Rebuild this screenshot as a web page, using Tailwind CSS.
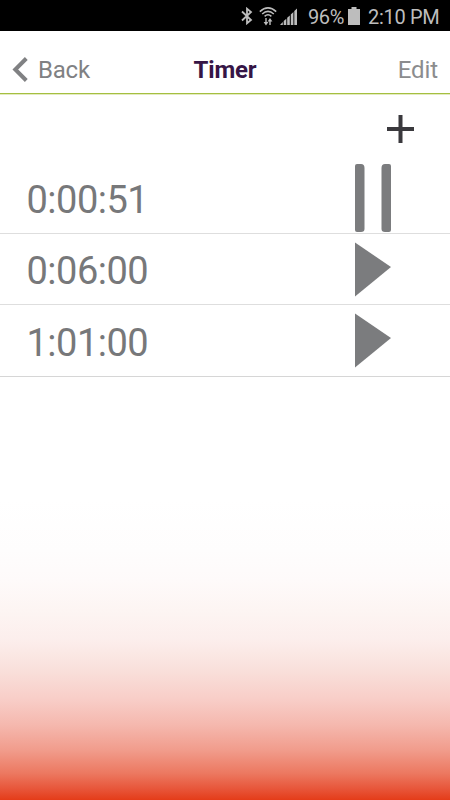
<!DOCTYPE html>
<html lang="en">
<head>
<meta charset="utf-8">
<title>Timer</title>
<script src="https://cdn.jsdelivr.net/npm/@tailwindcss/browser@4"></script>
</head>
<body class="overflow-hidden">
<div class="flex h-[800px] w-[450px] flex-col bg-[linear-gradient(to_bottom,#fff_500px,#fefdfd_550px,#fefafa_580px,#fdf5f3_610px,#fceeec_640px,#f9e0db_670px,#f8cdc7_700px,#f5b8ae_725px,#f19c8c_750px,#ec7961_773px,#e75337_790px,#e43c19_800px)] font-['Roboto',sans-serif] text-[#77787a]">
  <header class="flex h-[31px] shrink-0 items-center bg-black pl-[241px] text-[20px] leading-[31px] text-[#bdbdbd]">
    <svg class="mt-[1px] h-[18px] w-[12px] shrink-0" viewBox="0 0 12 18" fill="none" stroke="#bdbdbd" stroke-width="1.8"><path d="M1 4.5 10 13 6 16.3V1.7L10 5 1 13.5"/></svg>
    <svg class="ml-[6px] mt-[1px] h-[19px] w-[18px] shrink-0" viewBox="0 0 18 19" fill="none" stroke="#bdbdbd" stroke-width="1.5"><path d="M.8 4.600Q9-2.800 17.200 4.600M3.200 7Q9 1.800 14.800 7M5.600 9.400Q9 6.200 12.400 9.400"/><path d="M7 11V16M11 18v-5" stroke-width="1.4"/><path d="M4.600 15h4.800L7 18.400zM8.600 14.400h4.800L11 11z" fill="#bdbdbd" stroke="none"/></svg>
    <svg class="ml-[3px] mt-px h-[17px] w-[18px] shrink-0" viewBox="0 0 18 17" fill="#bdbdbd"><path d="M0 17 2.800 14v3zM3.700 17v-4l2.600-2.200V17zM7.200 17V9.800l2.600-2.400V17zM10.800 17V6.400L13.400 4v13zM14.300 17V3L17 .5V17z"/></svg>
    <span class="ml-[10px] mt-[3px] w-[38px] whitespace-nowrap tracking-[-0.4px]">96%</span>
    <svg class="ml-[2px] mt-px h-[18px] w-[12px] shrink-0" viewBox="0 0 12 18" fill="#bdbdbd"><path d="M0 2h3.500V0h5v2H12v16H0z"/></svg>
    <span class="ml-[8px] mt-[3px] whitespace-nowrap tracking-[-0.3px]">2:10 PM</span>
  </header>
  <nav class="grid h-[63px] shrink-0 grid-cols-3 items-center border-b border-[#a5bf40] bg-white px-[12px] pt-[15px] text-[24px] shadow-[0_1px_0_#e3ebc0]">
    <div class="flex items-center">
      <svg class="h-[25px] w-[16px]" viewBox="0 0 16 25" fill="none" stroke="#808183" stroke-width="4"><path d="M14.300 1.500 3.300 12.500 14.300 23.500"/></svg>
      <span class="ml-[10px] mt-px tracking-[-0.2px] text-[#808183]">Back</span>
    </div>
    <h1 class="mt-px text-center text-[24px] font-bold tracking-[-0.2px] text-[#361546]">Timer</h1>
    <span class="mt-px text-right tracking-[-0.1px] text-[#8b8c8e]">Edit</span>
  </nav>
  <div class="flex h-[69px] shrink-0 items-center justify-end pr-[36px]">
    <svg class="h-[28px] w-[27px]" viewBox="0 0 27 28" fill="none" stroke="#3a393d" stroke-width="4"><path d="M0 14h27M13.500 0v28"/></svg>
  </div>
  <main class="text-[38px] leading-[68px] tracking-[-0.5px]">
    <div class="flex h-[71px] items-center justify-between border-b border-[#dedede] pl-[26.5px] pr-[59px]">
      <span class="pt-[4px]">0:00:51</span>
      <svg class="h-[70px] w-[36px]" viewBox="0 0 36 70" fill="#7b7c7e"><path d="M0 3Q0 1 2 1h4q3.500 0 3.500 4v61q0 3-3.500 3H2q-2 0-2-2zM36 3q0-2-2-2h-4q-3.500 0-3.500 4v61q0 3 3.500 3h4q2 0 2-2z"/></svg>
    </div>
    <div class="flex h-[71px] items-center justify-between border-b border-[#dedede] pl-[26.5px] pr-[59px]">
      <span class="pt-[4px]">0:06:00</span>
      <svg class="h-[55px] w-[36px]" viewBox="0 0 36 55" fill="#7b7c7e"><path d="M0 .5 36 25 0 54.500z"/></svg>
    </div>
    <div class="flex h-[72px] items-center justify-between border-b border-[#d6d6d6] pl-[26.5px] pr-[59px]">
      <span class="pt-[4px]">1:01:00</span>
      <svg class="h-[55px] w-[36px]" viewBox="0 0 36 55" fill="#7b7c7e"><path d="M0 .5 36 25 0 54.500z"/></svg>
    </div>
  </main>
</div>
</body>
</html>
